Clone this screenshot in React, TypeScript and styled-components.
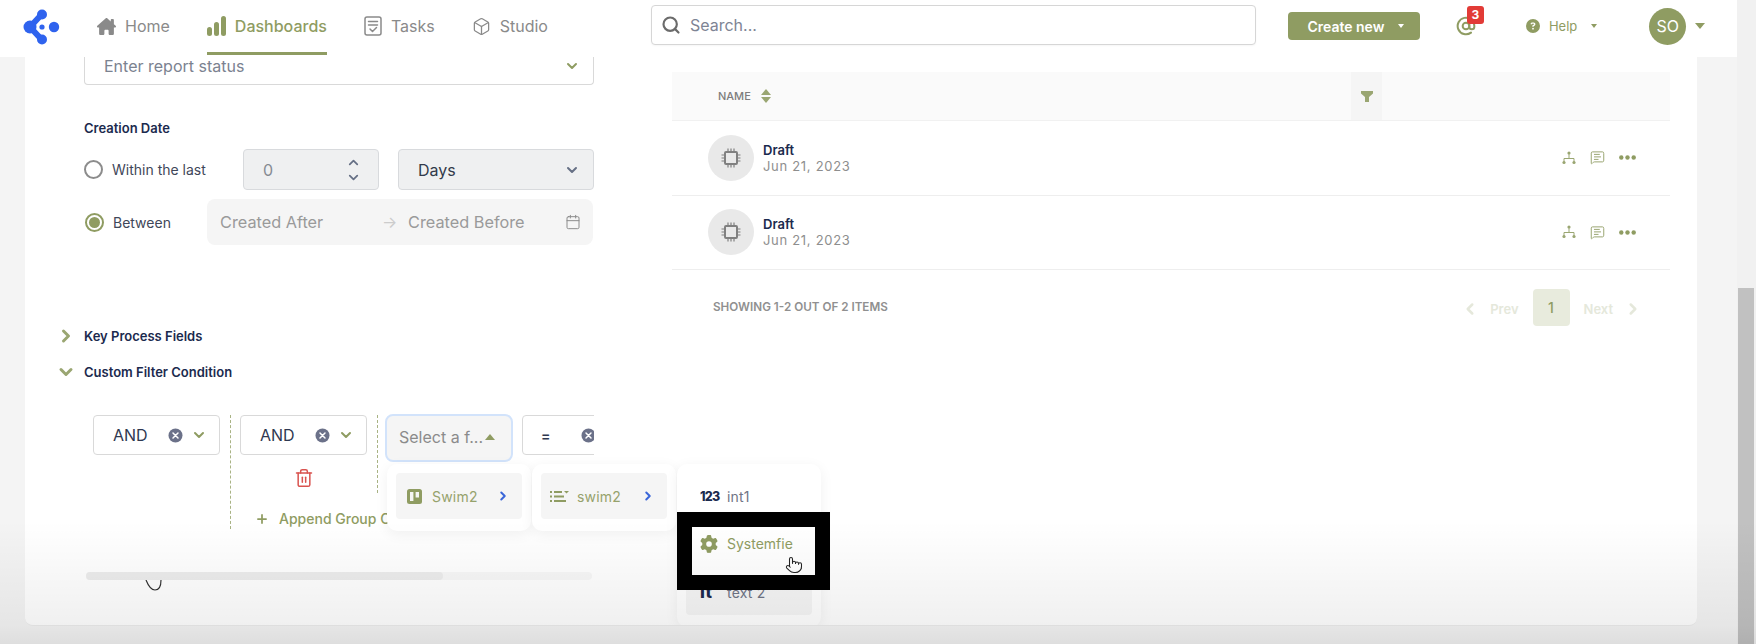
import React from 'react';
import styled, { createGlobalStyle } from 'styled-components';
import {
  AtSign,
  Box,
  Calendar,
  ChevronDown,
  ChevronLeft,
  ChevronRight,
  ChevronUp,
  MessageSquareText,
  Plus,
  Pointer,
  Search,
  Trash2,
} from 'lucide-react';
import { FaCircleQuestion, FaGear, FaHouseChimney } from 'react-icons/fa6';

const OLIVE = '#8f9c62';
const NAVY = '#1b2a4e';

const GlobalStyle = createGlobalStyle`
  html, body {
    margin: 0;
    padding: 0;
    background: #f4f4f4;
  }
  * {
    box-sizing: border-box;
  }
  body {
    font-family: Inter, "Liberation Sans", sans-serif;
  }
`;

const Page = styled.div`
  position: relative;
  display: flex;
  width: 1756px;
  height: 644px;
  overflow: hidden;
  background: #f4f4f4;
`;

const Main = styled.div`
  width: 1737px;
  display: flex;
  flex-direction: column;
`;

const ScrollTrack = styled.div`
  width: 19px;
  padding: 288px 2px 0 1px;
  background: #f1f1f1;
`;

const ScrollThumb = styled.div`
  height: 356px;
  background: #c1c1c1;
`;

const BottomFade = styled.div`
  position: absolute;
  left: 0;
  right: 0;
  top: 520px;
  bottom: 0;
  z-index: 5;
  pointer-events: none;
  background: linear-gradient(
    to bottom,
    rgba(0, 0, 0, 0) 0%,
    rgba(0, 0, 0, 0.06) 85%,
    rgba(0, 0, 0, 0.09) 100%
  );
`;

const Header = styled.header`
  height: 57px;
  flex: none;
  display: flex;
  align-items: center;
  padding-left: 23px;
  background: #fff;
`;

const Logo = styled.svg`
  width: 37px;
  height: 36px;
  margin-top: -4px;
  flex: none;
`;

const Nav = styled.nav`
  display: flex;
  align-items: flex-start;
  align-self: flex-start;
  gap: 37px;
  margin-left: 37px;
`;

const NavItem = styled.a<{ $active?: boolean }>`
  display: flex;
  align-items: center;
  gap: 9px;
  height: 55px;
  font-size: 16px;
  font-weight: ${(p) => (p.$active ? 500 : 400)};
  color: ${(p) => (p.$active ? OLIVE : '#8a8a8a')};
  border-bottom: 3px solid ${(p) => (p.$active ? OLIVE : 'transparent')};
`;

const SearchBox = styled.div`
  width: 605px;
  height: 40px;
  margin-left: 103px;
  margin-top: -7px;
  padding-left: 9px;
  display: flex;
  align-items: center;
  gap: 9px;
  background: #fff;
  border: 1px solid #d6d6d6;
  border-radius: 4px;
  font-size: 16px;
  color: #7e8494;
  box-shadow: 0 1px 2px rgba(0, 0, 0, 0.04);
`;

const CreateButton = styled.button`
  width: 132px;
  height: 28px;
  margin-left: 32px;
  margin-top: -5px;
  padding-right: 2px;
  display: flex;
  align-items: center;
  justify-content: center;
  gap: 14px;
  border: none;
  border-radius: 4px;
  background: ${OLIVE};
  color: #fff;
  font: 600 14px Inter, "Liberation Sans", sans-serif;
`;

const Caret = styled.span<{ $size?: number; $color?: string; $up?: boolean }>`
  display: inline-block;
  flex: none;
  width: 0;
  height: 0;
  border-left: ${(p) => p.$size ?? 4}px solid transparent;
  border-right: ${(p) => p.$size ?? 4}px solid transparent;
  ${(p) => (p.$up ? 'border-bottom' : 'border-top')}: ${(p) => (p.$size ?? 4) + 1}px solid ${(p) => p.$color ?? OLIVE};
`;

const MentionWrap = styled.div`
  position: relative;
  width: 28px;
  height: 40px;
  margin-left: 36px;
  margin-top: -5px;
  display: flex;
  align-items: center;
  color: ${OLIVE};
`;

const Badge = styled.span`
  position: absolute;
  left: 11px;
  top: 0;
  width: 17px;
  height: 18px;
  border-radius: 3px;
  background: #e23b36;
  color: #fff;
  font-size: 12px;
  font-weight: 700;
  line-height: 18px;
  text-align: center;
`;

const HelpLink = styled.div`
  margin-left: 42px;
  margin-top: -5px;
  display: flex;
  align-items: center;
  gap: 9px;
  font-size: 13px;
  color: ${OLIVE};
`;

const HelpCaret = styled.span`
  display: flex;
  margin-left: 5px;
`;

const Avatar = styled.div`
  width: 37px;
  height: 37px;
  margin-left: 52px;
  margin-top: -5px;
  border-radius: 50%;
  background: ${OLIVE};
  color: #fff;
  font-size: 16px;
  line-height: 37px;
  text-align: center;
`;

const AvatarCaret = styled.span`
  display: flex;
  margin: -5px 0 0 9px;
`;

const Content = styled.div`
  flex: 1;
  padding-left: 25px;
  padding-right: 40px;
`;

const Card = styled.div`
  position: relative;
  height: 569px;
  display: flex;
  background: #fff;
  border-bottom: 1px solid #ececec;
  border-radius: 0 0 8px 8px;
  overflow: hidden;
`;

const FilterColumn = styled.div`
  width: 647px;
  flex: none;
  padding-left: 59px;
`;

const FormBlock = styled.div`
  width: 510px;
`;

const StatusSelect = styled.div`
  height: 28px;
  padding: 0 13px 10px 19px;
  display: flex;
  align-items: center;
  justify-content: space-between;
  border: 1px solid #d9d9d9;
  border-top: none;
  border-radius: 0 0 4px 4px;
  font-size: 16px;
  color: #7b8290;
`;

const FieldLabel = styled.div`
  margin-top: 34px;
  height: 18px;
  font-size: 13px;
  font-weight: 600;
  line-height: 18px;
  color: ${NAVY};
`;

const DateRow = styled.div<{ $top: number; $height: number }>`
  display: flex;
  align-items: center;
  margin-top: ${(p) => p.$top}px;
  height: ${(p) => p.$height}px;
`;

const RadioLabel = styled.label<{ $width: number; $checked?: boolean }>`
  width: ${(p) => p.$width}px;
  flex: none;
  display: flex;
  align-items: center;
  gap: 9px;
  font-size: 14px;
  color: #3f4759;
  padding-left: ${(p) => (p.$checked ? '1px' : '0')};
`;

const RadioCircle = styled.span<{ $checked?: boolean }>`
  width: 19px;
  height: 19px;
  flex: none;
  display: flex;
  align-items: center;
  justify-content: center;
  border-radius: 50%;
  border: 2px solid ${(p) => (p.$checked ? OLIVE : '#8c8c8c')};
  &::after {
    content: '';
    width: 11px;
    height: 11px;
    border-radius: 50%;
    background: ${(p) => (p.$checked ? OLIVE : 'transparent')};
  }
`;

const NumberInput = styled.div`
  width: 136px;
  height: 41px;
  padding: 0 19px;
  flex: none;
  display: flex;
  align-items: center;
  justify-content: space-between;
  background: #eff0f1;
  border: 1px solid #d8dadd;
  border-radius: 4px;
  font-size: 16px;
  color: #868b93;
`;

const Stepper = styled.div`
  display: flex;
  flex-direction: column;
  margin-right: -2px;
  color: #667085;
`;

const UnitSelect = styled.div`
  width: 196px;
  height: 41px;
  margin-left: 19px;
  padding: 0 13px 0 19px;
  display: flex;
  align-items: center;
  justify-content: space-between;
  background: #eff0f1;
  border: 1px solid #d8dadd;
  border-radius: 4px;
  font-size: 16px;
  color: #323a4a;
`;

const RangePicker = styled.div`
  width: 386px;
  height: 46px;
  padding: 0 12px 0 13px;
  display: flex;
  align-items: center;
  background: #f5f5f5;
  border-radius: 8px;
  font-size: 16.3px;
  color: #9a9a9a;
`;

const RangeValue = styled.span`
  width: 162px;
`;

const RangeArrow = styled.span`
  width: 26px;
  font-size: 16px;
  color: #cccccc;
`;

const RangeEnd = styled.span`
  flex: 1;
`;

const SectionRow = styled.div<{ $top: number }>`
  margin-top: ${(p) => p.$top}px;
  margin-left: -27px;
  height: 19px;
  display: flex;
  align-items: center;
  font-size: 13px;
  font-weight: 600;
  color: ${NAVY};
`;

const SectionIcon = styled.span`
  width: 27px;
  margin-left: -1px;
  margin-right: 1px;
  display: flex;
  color: #9aa672;
`;

const Builder = styled.div`
  margin: 33px 0 0 9px;
  width: 501px;
  height: 115px;
  overflow: hidden;
  display: flex;
  align-items: flex-start;
  padding-top: 1px;
`;

const RuleSelect = styled.div<{ $width?: number }>`
  width: ${(p) => p.$width ?? 127}px;
  height: 40px;
  flex: none;
  padding: 0 12px 0 19px;
  display: flex;
  align-items: center;
  background: #fff;
  border: 1px solid #d9d9d9;
  border-radius: 4px;
  font-size: 16px;
  color: #2f3850;
`;

const RuleValue = styled.span`
  flex: 1;
`;

const EqualValue = styled.span`
  width: 40px;
  flex: none;
  font-size: 14px;
  font-weight: 600;
`;

const ClearIcon = styled.svg`
  width: 15px;
  height: 15px;
  flex: none;
  margin-right: 8px;
`;

const GroupLine = styled.div<{ $height: number; $after?: number }>`
  margin: 0 ${(p) => p.$after ?? 9}px 0 10px;
  width: 0;
  height: ${(p) => p.$height}px;
  flex: none;
  border-left: 1px dashed #a9b384;
`;

const GroupBody = styled.div`
  display: flex;
  flex-direction: column;
  flex: none;
`;

const GroupRow = styled.div`
  display: flex;
  align-items: flex-start;
`;

const RuleColumn = styled.div`
  width: 127px;
  flex: none;
  display: flex;
  flex-direction: column;
  align-items: center;
  gap: 13px;
  color: #d9534f;
`;

const FieldSelect = styled.div`
  width: 128px;
  height: 48px;
  flex: none;
  margin-top: -1px;
  padding: 0 16px 3px 12px;
  display: flex;
  align-items: center;
  justify-content: space-between;
  background: #f5f5f5;
  border: 2px solid #d2e3fb;
  border-radius: 8px;
  font-size: 16px;
  color: #8b8b8b;
  white-space: nowrap;
`;

const EqualSelect = styled(RuleSelect)`
  margin-left: 9px;
  padding-left: 18px;
`;

const AppendLink = styled.div`
  margin: 16px 0 0 15px;
  height: 19px;
  display: flex;
  align-items: center;
  gap: 10px;
  font-size: 14px;
  font-weight: 500;
  color: ${OLIVE};
  white-space: nowrap;
`;

const HScroll = styled.div`
  position: relative;
  margin: 43px 0 0 2px;
  width: 506px;
  height: 8px;
  border-radius: 4px;
  background: #f7f7f7;
`;

const HScrollThumb = styled.div`
  position: relative;
  z-index: 1;
  width: 357px;
  height: 8px;
  border-radius: 4px;
  background: #ececec;
`;

const GrabCursor = styled.svg`
  position: absolute;
  left: 59px;
  top: 7px;
  width: 17px;
  height: 12px;
`;

const Cascade = styled.div`
  position: absolute;
  left: 362px;
  top: 407px;
  z-index: 2;
  display: flex;
  align-items: flex-start;
  gap: 1px;
`;

const CascadePanel = styled.div`
  position: relative;
  width: 144px;
  padding: 9px 9px 12px;
  background: #fff;
  border-radius: 10px;
  box-shadow: 0 3px 14px rgba(0, 0, 0, 0.06);
`;

const CascadeItem = styled.div<{ $filled?: boolean; $olive?: boolean; $gapTop?: number }>`
  height: 46px;
  margin-top: ${(p) => p.$gapTop ?? 0}px;
  padding: 0 12px 0 11px;
  display: flex;
  align-items: center;
  gap: 10px;
  border-radius: 4px;
  background: ${(p) => (p.$filled ? '#f5f5f5' : 'transparent')};
  font-size: 14px;
  color: ${(p) => (p.$olive ? '#96a26c' : '#6f7485')};
`;

const ItemLabel = styled.span`
  flex: 1;
  letter-spacing: 0.2px;
`;

const ListGlyph = styled.span`
  display: flex;
  margin-left: -2px;
  margin-right: -2px;
`;

const ItemGlyph = styled.span`
  width: 18px;
  flex: none;
  margin-left: 3px;
  margin-right: -1px;
  font-size: 12.5px;
  font-weight: 800;
  color: ${NAVY};
  letter-spacing: -0.8px;
  white-space: nowrap;
`;

const TextGlyph = styled(ItemGlyph)`
  font-size: 17px;
  letter-spacing: 0.5px;
`;

const FocusFrame = styled.div`
  position: absolute;
  left: 0;
  top: 48px;
  width: 153px;
  height: 78px;
  border: 15px solid #000;
  background: #fff;
  padding: 8px 0 0 8px;
  display: flex;
  align-items: flex-start;
  gap: 9px;
  font-size: 14px;
  color: ${OLIVE};
`;

const HandCursor = styled.span`
  position: absolute;
  left: 93px;
  top: 29px;
  display: flex;
  color: #222;
`;

const TableColumn = styled.div`
  width: 998px;
  flex: none;
  padding-top: 15px;
`;

const TableHead = styled.div`
  height: 49px;
  display: flex;
  background: #fafafa;
  border-bottom: 1px solid #f1f1f1;
`;

const NameHead = styled.div`
  width: 679px;
  padding-left: 46px;
  display: flex;
  align-items: center;
  gap: 10px;
  font-size: 11px;
  font-weight: 500;
  color: #7d7d7d;
`;

const SortArrows = styled.span`
  display: flex;
  flex-direction: column;
  gap: 2px;
`;

const FilterHead = styled.div`
  width: 31px;
  display: flex;
  align-items: center;
  justify-content: center;
  background: #f5f5f5;
`;

const Row = styled.div`
  height: 74.5px;
  padding: 0 34px 0 36px;
  display: flex;
  align-items: center;
  gap: 9px;
  border-bottom: 1px solid #eeeeee;
`;

const RowAvatar = styled.div`
  width: 46px;
  height: 46px;
  display: flex;
  align-items: center;
  justify-content: center;
  border-radius: 50%;
  background: #e9e9e9;
`;

const RowText = styled.div`
  flex: 1;
`;

const RowTitle = styled.div`
  font-size: 13px;
  font-weight: 600;
  line-height: 16px;
  color: ${NAVY};
`;

const RowDate = styled.div`
  font-size: 13px;
  line-height: 16px;
  letter-spacing: 0.7px;
  color: #8e8e8e;
`;

const RowActions = styled.div`
  display: flex;
  align-items: center;
  gap: 14px;
  color: #9aa672;
`;

const TableFoot = styled.div`
  margin-top: 19px;
  height: 37px;
  padding: 0 28px 0 41px;
  display: flex;
  align-items: center;
  justify-content: space-between;
`;

const ItemCount = styled.span`
  font-size: 11.7px;
  font-weight: 600;
  color: #909090;
  margin-top: -1px;
`;

const Pager = styled.div`
  display: flex;
  align-items: center;
  gap: 14px;
  font-size: 13px;
  font-weight: 600;
  color: #e5e8db;
`;

const PageNumber = styled.span`
  width: 37px;
  height: 37px;
  display: flex;
  align-items: center;
  justify-content: center;
  border-radius: 4px;
  background: #e8ebdd;
  color: #8f9c62;
  font-size: 14px;
  font-weight: 500;
`;

const PagerLabel = styled.span`
  display: flex;
  align-items: center;
  gap: 11px;
  margin-top: 3px;
`;

const LogoMark = () => (
  <Logo viewBox="0 0 37 36">
    <path d="M19 5 L7 18 L19 31" fill="none" stroke="#2f63ee" strokeWidth="6" strokeLinejoin="round" />
    <circle cx="19" cy="5.5" r="5" fill="#2f63ee" />
    <circle cx="19" cy="30.5" r="5" fill="#2f63ee" />
    <circle cx="7" cy="18" r="6.5" fill="#2f63ee" />
    <circle cx="19" cy="18" r="2.6" fill="#2f63ee" />
    <circle cx="31" cy="18" r="5.2" fill="#2f63ee" />
  </Logo>
);

const BarsIcon = () => (
  <svg width="19" height="22" viewBox="0 0 19 22" fill={OLIVE}>
    <rect x="0" y="12" width="5" height="9" rx="2.5" />
    <rect x="7" y="7" width="5" height="14" rx="2.5" />
    <rect x="14" y="1" width="5" height="20" rx="2.5" />
  </svg>
);

const TasksIcon = () => (
  <svg width="18" height="20" viewBox="0 0 18 20" fill="none" stroke="#8a8a8a" strokeWidth="1.5" strokeLinecap="round" strokeLinejoin="round">
    <rect x="1" y="1" width="16" height="18" rx="2" />
    <path d="M4.5 5.5 H13.5 M4.5 9 H13.5 M6 13 L8.5 15.5 L12.5 11.5" />
  </svg>
);

const Clear = () => (
  <ClearIcon viewBox="0 0 15 15">
    <circle cx="7.5" cy="7.5" r="7" fill="#6b7189" />
    <path d="M5 5 L10 10 M10 5 L5 10" stroke="#fff" strokeWidth="1.5" strokeLinecap="round" />
  </ClearIcon>
);

const KanbanIcon = () => (
  <svg width="15" height="15" viewBox="0 0 15 15">
    <rect width="15" height="15" rx="2.5" fill={OLIVE} />
    <rect x="3" y="3" width="3.4" height="9" fill="#f5f5f5" />
    <rect x="8.6" y="3" width="3.4" height="5.5" fill="#f5f5f5" />
  </svg>
);

const ListIcon = () => (
  <svg width="19" height="13" viewBox="0 0 19 13" fill={OLIVE}>
    <rect x="0" y="1" width="2" height="2" />
    <rect x="0" y="5.5" width="2" height="2" />
    <rect x="0" y="10" width="2" height="2" />
    <rect x="4" y="1" width="8" height="2" />
    <rect x="4" y="5.5" width="10" height="2" />
    <rect x="4" y="10" width="12" height="2" />
    <path d="M14 1 H19 L16.5 3.6 Z" />
  </svg>
);

const ChipIcon = () => (
  <svg width="20" height="20" viewBox="0 0 20 20" fill="none" stroke="#808080">
    <rect x="4" y="4" width="12" height="12" rx="1" strokeWidth="2" />
    <path d="M7 0.5 V3 M10 0.5 V3 M13 0.5 V3 M7 17 V19.5 M10 17 V19.5 M13 17 V19.5 M0.5 7 H3 M0.5 10 H3 M0.5 13 H3 M17 7 H19.5 M17 10 H19.5 M17 13 H19.5" strokeWidth="1.2" />
  </svg>
);

const HierarchyIcon = () => (
  <svg width="14" height="14" viewBox="0 0 14 14" fill="none" stroke="#9aa672" strokeWidth="1">
    <path d="M7 3 V7.5 M2 11 V7.5 H12 V11" />
    <circle cx="7" cy="2" r="1.6" fill="#9aa672" stroke="none" />
    <circle cx="2" cy="11.5" r="1.6" fill="#9aa672" stroke="none" />
    <circle cx="12" cy="11.5" r="1.6" fill="#9aa672" stroke="none" />
  </svg>
);

const DotsIcon = () => (
  <svg width="17" height="5" viewBox="0 0 17 5" fill={OLIVE}>
    <circle cx="2.3" cy="2.5" r="2.2" />
    <circle cx="8.5" cy="2.5" r="2.2" />
    <circle cx="14.7" cy="2.5" r="2.2" />
  </svg>
);

const FunnelIcon = () => (
  <svg width="12" height="11" viewBox="0 0 12 11" fill="#9aa672">
    <path d="M0 0 H12 V2.5 L8 6 V11 H4 V6 L0 2.5 Z" />
  </svg>
);

const rows = [
  { title: 'Draft', date: 'Jun 21, 2023' },
  { title: 'Draft', date: 'Jun 21, 2023' },
];

export default function App() {
  return (
    <Page>
      <GlobalStyle />
      <Main>
        <Header>
          <LogoMark />
          <Nav>
            <NavItem>
              <FaHouseChimney size={19} />
              Home
            </NavItem>
            <NavItem $active>
              <BarsIcon />
              Dashboards
            </NavItem>
            <NavItem>
              <TasksIcon />
              Tasks
            </NavItem>
            <NavItem>
              <Box size={19} strokeWidth={1.6} />
              Studio
            </NavItem>
          </Nav>
          <SearchBox>
            <Search size={20} color="#6b6b6b" strokeWidth={2.6} />
            Search...
          </SearchBox>
          <CreateButton>
            Create new
            <Caret $size={3.5} $color="#fff" />
          </CreateButton>
          <MentionWrap>
            <AtSign size={20} strokeWidth={2.4} />
            <Badge>3</Badge>
          </MentionWrap>
          <HelpLink>
            <FaCircleQuestion size={14} />
            Help
            <HelpCaret>
              <Caret $size={3.5} />
            </HelpCaret>
          </HelpLink>
          <Avatar>SO</Avatar>
          <AvatarCaret>
            <Caret $size={5} />
          </AvatarCaret>
        </Header>
        <Content>
          <Card>
            <FilterColumn>
              <FormBlock>
                <StatusSelect>
                  Enter report status
                  <ChevronDown size={16} color={OLIVE} strokeWidth={3} />
                </StatusSelect>
                <FieldLabel>Creation Date</FieldLabel>
                <DateRow $top={12} $height={41}>
                  <RadioLabel $width={159}>
                    <RadioCircle />
                    Within the last
                  </RadioLabel>
                  <NumberInput>
                    0
                    <Stepper>
                      <ChevronUp size={15} strokeWidth={2.8} />
                      <ChevronDown size={15} strokeWidth={2.8} />
                    </Stepper>
                  </NumberInput>
                  <UnitSelect>
                    Days
                    <ChevronDown size={16} color="#667085" strokeWidth={3} />
                  </UnitSelect>
                </DateRow>
                <DateRow $top={9} $height={46}>
                  <RadioLabel $width={123} $checked>
                    <RadioCircle $checked />
                    Between
                  </RadioLabel>
                  <RangePicker>
                    <RangeValue>Created After</RangeValue>
                    <RangeArrow>→</RangeArrow>
                    <RangeEnd>Created Before</RangeEnd>
                    <Calendar size={16} color="#8c8c8c" strokeWidth={1.5} />
                  </RangePicker>
                </DateRow>
                <SectionRow $top={81}>
                  <SectionIcon>
                    <ChevronRight size={20} strokeWidth={3.6} />
                  </SectionIcon>
                  Key Process Fields
                </SectionRow>
                <SectionRow $top={17}>
                  <SectionIcon>
                    <ChevronDown size={20} strokeWidth={3.6} />
                  </SectionIcon>
                  Custom Filter Condition
                </SectionRow>
                <Builder>
                  <RuleSelect>
                    <RuleValue>AND</RuleValue>
                    <Clear />
                    <ChevronDown size={16} color={OLIVE} strokeWidth={3} />
                  </RuleSelect>
                  <GroupLine $height={114} />
                  <GroupBody>
                    <GroupRow>
                      <RuleColumn>
                        <RuleSelect>
                          <RuleValue>AND</RuleValue>
                          <Clear />
                          <ChevronDown size={16} color={OLIVE} strokeWidth={3} />
                        </RuleSelect>
                        <Trash2 size={20} strokeWidth={1.8} />
                      </RuleColumn>
                      <GroupLine $height={78} $after={7} />
                      <FieldSelect>
                        Select a f...
                        <Caret $size={5} $up />
                      </FieldSelect>
                      <EqualSelect $width={120}>
                        <EqualValue>=</EqualValue>
                        <Clear />
                      </EqualSelect>
                    </GroupRow>
                    <AppendLink>
                      <Plus size={14} strokeWidth={3} />
                      Append Group Condition
                    </AppendLink>
                  </GroupBody>
                </Builder>
                <HScroll>
                  <HScrollThumb />
                  <GrabCursor viewBox="0 0 17 12" fill="none" stroke="#333" strokeWidth="1.2">
                    <path d="M1 1 C3 6 6 11 10 11 C14 11 16 7 16 1" />
                  </GrabCursor>
                </HScroll>
              </FormBlock>
            </FilterColumn>
            <TableColumn>
              <TableHead>
                <NameHead>
                  NAME
                  <SortArrows>
                    <Caret $size={5} $up $color="#9aa672" />
                    <Caret $size={5} $color="#9aa672" />
                  </SortArrows>
                </NameHead>
                <FilterHead>
                  <FunnelIcon />
                </FilterHead>
              </TableHead>
              {rows.map((row, i) => (
                <Row key={i}>
                  <RowAvatar>
                    <ChipIcon />
                  </RowAvatar>
                  <RowText>
                    <RowTitle>{row.title}</RowTitle>
                    <RowDate>{row.date}</RowDate>
                  </RowText>
                  <RowActions>
                    <HierarchyIcon />
                    <MessageSquareText size={15} strokeWidth={1.6} />
                    <DotsIcon />
                  </RowActions>
                </Row>
              ))}
              <TableFoot>
                <ItemCount>SHOWING 1-2 OUT OF 2 ITEMS</ItemCount>
                <Pager>
                  <PagerLabel>
                    <ChevronLeft size={18} strokeWidth={3.4} />
                    Prev
                  </PagerLabel>
                  <PageNumber>1</PageNumber>
                  <PagerLabel>
                    Next
                    <ChevronRight size={18} strokeWidth={3.4} />
                  </PagerLabel>
                </Pager>
              </TableFoot>
            </TableColumn>
            <Cascade>
              <CascadePanel>
                <CascadeItem $filled $olive>
                  <KanbanIcon />
                  <ItemLabel>Swim2</ItemLabel>
                  <ChevronRight size={14} color="#3a66d9" strokeWidth={3.4} />
                </CascadeItem>
              </CascadePanel>
              <CascadePanel>
                <CascadeItem $filled $olive>
                  <ListGlyph>
                    <ListIcon />
                  </ListGlyph>
                  <ItemLabel>swim2</ItemLabel>
                  <ChevronRight size={14} color="#3a66d9" strokeWidth={3.4} />
                </CascadeItem>
              </CascadePanel>
              <CascadePanel>
                <CascadeItem>
                  <ItemGlyph>123</ItemGlyph>
                  <ItemLabel>int1</ItemLabel>
                </CascadeItem>
                <CascadeItem $filled $gapTop={50}>
                  <TextGlyph>It</TextGlyph>
                  <ItemLabel>text 2</ItemLabel>
                </CascadeItem>
                <FocusFrame>
                  <FaGear size={18} />
                  Systemfie
                  <HandCursor>
                    <Pointer size={18} strokeWidth={1.4} fill="#fff" />
                  </HandCursor>
                </FocusFrame>
              </CascadePanel>
            </Cascade>
          </Card>
        </Content>
      </Main>
      <ScrollTrack>
        <ScrollThumb />
      </ScrollTrack>
      <BottomFade />
    </Page>
  );
}
